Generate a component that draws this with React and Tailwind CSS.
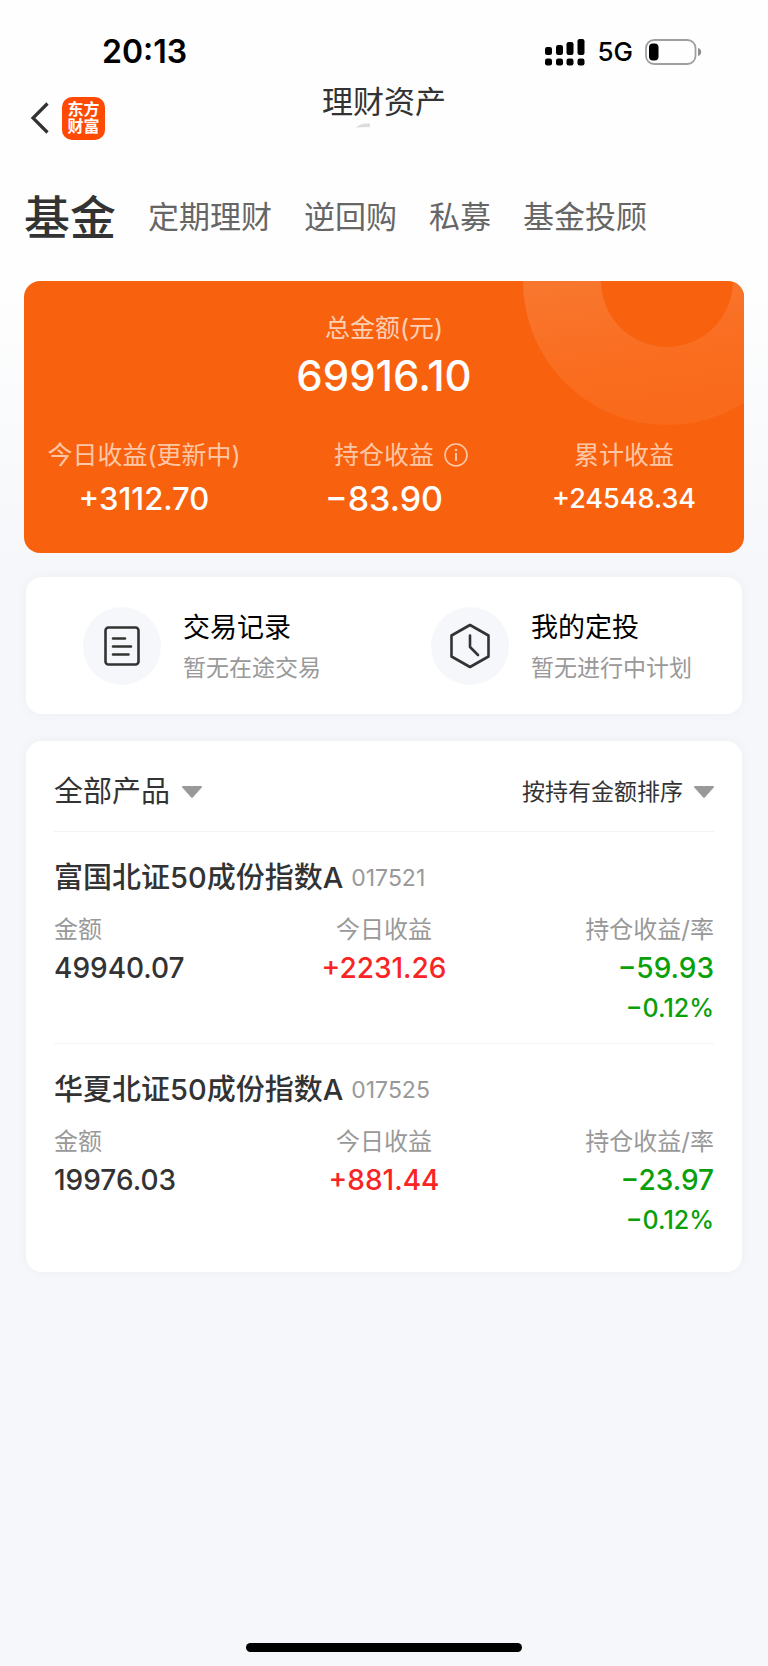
import { useState } from 'react';

const tabs = ['基金', '定期理财', '逆回购', '私募', '基金投顾'];

const funds = [
    { name: '富国北证50成份指数A', code: '017521', amount: '49940.07', today: '+2231.26', held: '−59.93', rate: '−0.12%' },
    { name: '华夏北证50成份指数A', code: '017525', amount: '19976.03', today: '+881.44', held: '−23.97', rate: '−0.12%' },
];

function StatusBar() {
    return (
        <div className="flex items-center justify-between h-[104px] pl-[102px] pr-[66px]">
            <span className="text-[32px] leading-none font-semibold text-black">20:13</span>
            <div className="flex items-center">
                {/* Dual SIM signal */}
                <svg width="40" height="28" viewBox="0 0 40 28" fill="#000" className="mr-3">
                    <rect x="0" y="9" width="7" height="8" rx="2.2" />
                    <rect x="11" y="7" width="7" height="10" rx="2.2" />
                    <rect x="21.500" y="4" width="7" height="13" rx="2.2" />
                    <rect x="32.500" y="1" width="7" height="16" rx="2.2" />
                    <rect x="0" y="20.500" width="7" height="7" rx="2.2" />
                    <rect x="11" y="20.500" width="7" height="7" rx="2.2" />
                    <rect x="21.500" y="20.500" width="7" height="7" rx="2.2" />
                    <rect x="32.500" y="20.500" width="7" height="7" rx="2.2" />
                </svg>
                <span className="text-[26px] leading-none font-medium text-black mr-3">5G</span>
                <svg width="57" height="26" viewBox="0 0 57 26">
                    <rect x="1" y="1" width="49.500" height="24" rx="8" fill="none" stroke="#a0a0a0" strokeWidth="1.800" />
                    <rect x="4" y="4.500" width="9.500" height="17" rx="4" fill="#000" />
                    <path d="M53 9c2.600 1 3.200 2.500 3.200 4s-.6 3-3.200 4z" fill="#8e8e8e" />
                </svg>
            </div>
        </div>
    );
}

function Header() {
    return (
        <header className="grid grid-cols-[1fr_auto_1fr] items-start h-[68px] -mt-[24px] px-[30px]">
            <div className="flex items-center h-[76px] gap-[13px]">
                <button aria-label="返回">
                    <svg width="19" height="32" viewBox="0 0 19 32" fill="none" stroke="#333" strokeWidth="3.200">
                        <path d="M17.500 1.500 3 16l14.500 14.500" />
                    </svg>
                </button>
                <div className="flex items-center justify-center w-[43px] h-[43px] rounded-[10px] bg-[#ff4a03] text-white text-[16px] leading-[17px] font-bold text-center">
                    <span>东方<br />财富</span>
                </div>
            </div>
            <div className="flex flex-col pt-1">
                <h1 className="text-[31px] leading-[36px] text-[#333]">理财资产</h1>
                <svg width="20" height="6" viewBox="0 0 20 6" className="ml-8 mt-[3px]">
                    <path d="M2 4.500C5 1 10 0 16 .5V4z" fill="#dcdcdc" />
                </svg>
            </div>
        </header>
    );
}

function InfoIcon() {
    return (
        <svg width="24" height="24" viewBox="0 0 24 24" fill="none" stroke="#fdc7a6" strokeWidth="1.600">
            <circle cx="12" cy="12" r="11" />
            <path d="M12 10v8" strokeWidth="2" />
            <circle cx="12" cy="7" r="1.300" fill="#fdc7a6" stroke="none" />
        </svg>
    );
}

function Summary() {
    return (
        <section className="relative overflow-hidden mx-6 h-[272px] rounded-[16px] bg-[#f8620f] text-center text-white">
            <svg width="221" height="144" viewBox="0 0 221 144" className="absolute top-0 right-0">
                <defs>
                    <linearGradient id="ring" x1="0" y1="0" x2="0.300" y2="1">
                        <stop offset="0" stopColor="#f8772f" />
                        <stop offset="0.700" stopColor="#fa6c1e" />
                        <stop offset="1" stopColor="#f96a1b" />
                    </linearGradient>
                </defs>
                <path d="M0 0a144 144 0 0 0 288 0h-78a66 66 0 0 1-132 0z" fill="url(#ring)" />
            </svg>
            <div className="relative pt-7">
                <p className="text-[25px] leading-[38px] text-[#fdd0b5]">总金额(元)</p>
                <p className="text-[42px] leading-[58px] font-medium">69916.10</p>
            </div>
            <div className="relative grid grid-cols-3 pt-[30px]">
                <div>
                    <p className="text-[25px] leading-[40px] text-[#fdc7a6]">今日收益(更新中)</p>
                    <p className="text-[31px] leading-[48px] font-medium">+3112.70</p>
                </div>
                <div>
                    <div className="flex items-center justify-center text-[25px] leading-[40px] text-[#fdc7a6]">
                        持仓收益
                        <button aria-label="持仓收益说明" className="ml-2.5 -mr-[34px]"><InfoIcon /></button>
                    </div>
                    <p className="text-[34px] leading-[48px] font-medium">−83.90</p>
                </div>
                <div>
                    <p className="text-[25px] leading-[40px] text-[#fdc7a6]">累计收益</p>
                    <p className="text-[27px] leading-[48px] font-medium">+24548.34</p>
                </div>
            </div>
        </section>
    );
}

function Shortcut({ title, note, children }) {
    return (
        <button className="flex items-center pl-[37px] text-left">
            <span className="flex items-center justify-center w-[78px] h-[78px] rounded-full bg-[#f5f7fa] mr-[22px]">{children}</span>
            <span className="flex flex-col pt-[5px]">
                <span className="text-[27px] leading-[40px] text-black">{title}</span>
                <span className="text-[23px] leading-[40px] text-[#999]">{note}</span>
            </span>
        </button>
    );
}

function Shortcuts() {
    return (
        <section className="grid grid-cols-2 mx-[26px] mt-6 h-[137px] pl-5 rounded-[16px] bg-white shadow-[0_0_12px_rgba(60,70,90,0.04)]">
            <Shortcut title="交易记录" note="暂无在途交易">
                <svg width="36" height="40" viewBox="0 0 36 40" fill="none" stroke="#333" strokeWidth="2.600" strokeLinecap="round">
                    <rect x="1.500" y="1.500" width="33" height="37" rx="3" />
                    <path d="M9 12.500h12M9 20.500h18M9 28.500h15.500" />
                </svg>
            </Shortcut>
            <Shortcut title="我的定投" note="暂无进行中计划">
                <svg width="42" height="46" viewBox="0 0 42 46" fill="none" stroke="#333" strokeWidth="2.600" strokeLinecap="round" strokeLinejoin="round">
                    <path d="M21 2 39.500 12.500v21L21 44 2.500 33.500v-21z" />
                    <path d="M21 12.500V24l8 8" />
                </svg>
            </Shortcut>
        </section>
    );
}

function Caret() {
    return (
        <svg width="20" height="12" viewBox="0 0 20 12" fill="#999" className="pointer-events-none">
            <path d="M1 0h18c.9 0 1.200.8.700 1.400L11 11.200a1.400 1.400 0 0 1-2 0L.3 1.400C-.2.8.1 0 1 0z" />
        </svg>
    );
}

function Fund({ fund }) {
    return (
        <li className="h-[212px] pt-[26px] border-t border-[#f3f3f3]">
            <h2 className="flex items-center leading-[40px]">
                <span className="text-[29px] font-medium text-[#333]">{fund.name}</span>
                <span className="ml-2 text-[23px] text-[#999]">{fund.code}</span>
            </h2>
            <dl className="grid grid-cols-3 pt-3.5 text-[28px] leading-[40px] font-medium">
                <div>
                    <dt className="text-[24px] leading-[36px] font-normal text-[#999]">金额</dt>
                    <dd className="text-[#333]">{fund.amount}</dd>
                </div>
                <div className="text-center">
                    <dt className="text-[24px] leading-[36px] font-normal text-[#999]">今日收益</dt>
                    <dd className="text-[#f92424]">{fund.today}</dd>
                </div>
                <div className="text-right">
                    <dt className="text-[24px] leading-[36px] font-normal text-[#999]">持仓收益/率</dt>
                    <dd className="text-[#09a009]">{fund.held}</dd>
                    <dd className="text-[25px] text-[#09a009]">{fund.rate}</dd>
                </div>
            </dl>
        </li>
    );
}

function Products() {
    return (
        <section className="mx-[26px] mt-[27px] px-7 pb-[17px] rounded-[16px] bg-white shadow-[0_0_12px_rgba(60,70,90,0.04)]">
            <div className="flex items-center justify-between h-[90px] pt-3 text-[#333]">
                <label className="flex items-center gap-[11px]">
                    <select aria-label="产品" className="appearance-none text-[29px] leading-[40px]">
                        <option>全部产品</option>
                    </select>
                    <Caret />
                </label>
                <label className="flex items-center gap-[11px]">
                    <select aria-label="排序" className="appearance-none text-[23px] leading-[40px]">
                        <option>按持有金额排序</option>
                    </select>
                    <Caret />
                </label>
            </div>
            <ul>
                {funds.map((fund) => <Fund key={fund.code} fund={fund} />)}
            </ul>
        </section>
    );
}

export default function App() {
    const [activeTab, setActiveTab] = useState('基金');

    return (
        <main className="flex flex-col min-h-screen bg-[#f5f7fa] bg-[linear-gradient(#fefefe_281px,#f5f7fa_570px)] font-['Inter','Noto_Sans_CJK_SC',sans-serif]">
            <StatusBar />
            <Header />
            <nav className="flex items-center gap-8 h-[133px] pl-6 pt-1">
                {tabs.map((tab) => (
                    <button
                        key={tab}
                        onClick={() => setActiveTab(tab)}
                        className={tab === activeTab ? 'text-[46px] leading-none font-medium text-[#333]' : 'text-[31px] leading-none text-[#666]'}
                    >
                        {tab}
                    </button>
                ))}
            </nav>
            <Summary />
            <Shortcuts />
            <Products />
            <div className="self-center mt-auto mb-3.5 w-[276px] h-[9px] rounded-full bg-black" />
        </main>
    );
}
